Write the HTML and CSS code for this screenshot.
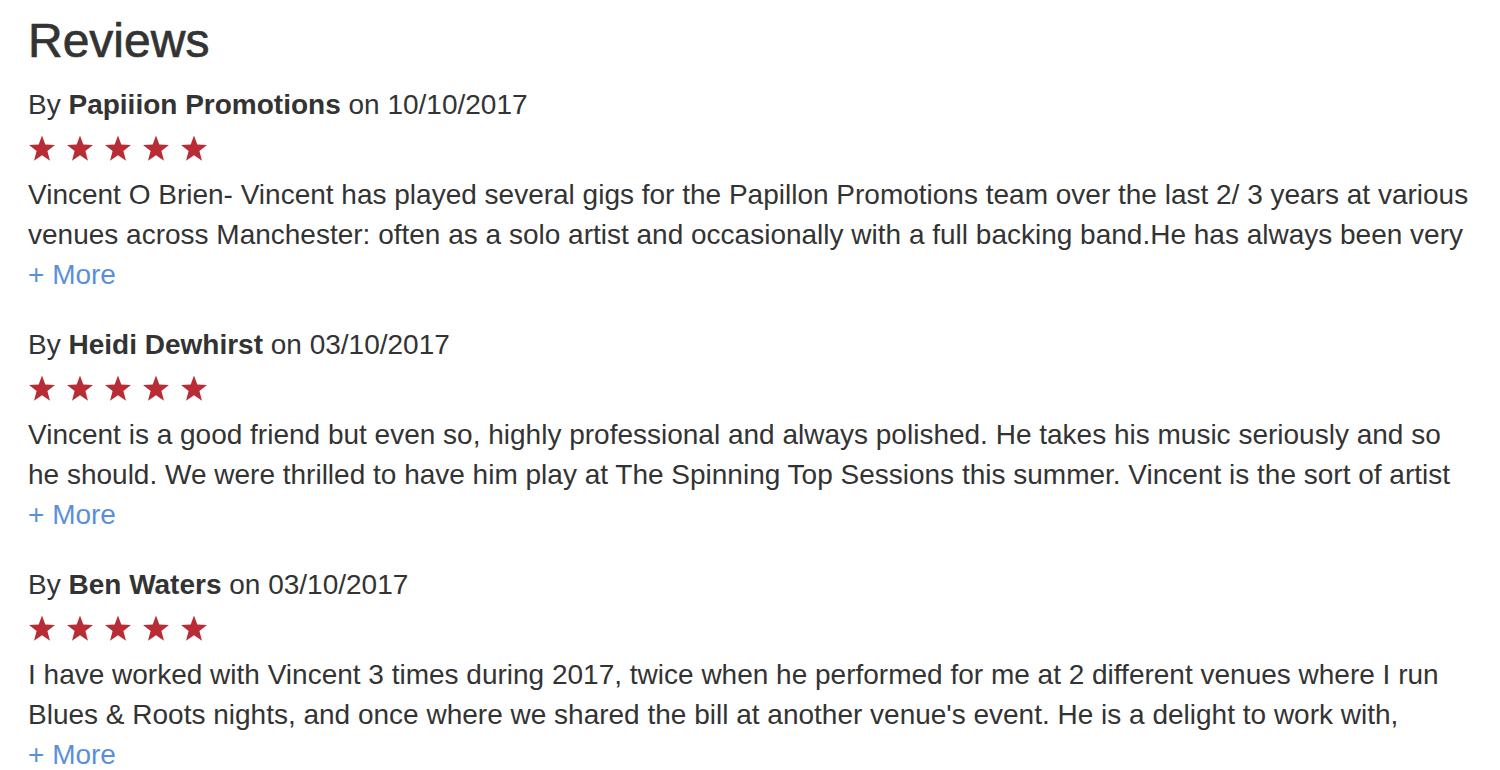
FILE: index.html
```html
<!DOCTYPE html>
<html lang="en">
<head>
    <meta charset="UTF-8">
    <meta name="viewport" content="width=device-width, initial-scale=1.0">
    <title>Reviews</title>
    <link rel="stylesheet" href="styles.css">
</head>
<body>
    <svg class="sprite" xmlns="http://www.w3.org/2000/svg">
        <symbol id="star" viewBox="0 0 26 26">
            <polygon points="13,0.5 16.2,9.2 25.5,9.6 18.2,15.4 20.7,24.8 13,19.5 5.3,24.8 7.8,15.4 0.5,9.6 9.8,9.2"/>
        </symbol>
    </svg>

    <section class="reviews">
        <h2>Reviews</h2>

        <div class="review">
            <div class="review-by">By <strong>Papiiion Promotions</strong> on 10/10/2017</div>
            <div class="stars">
                <svg><use href="#star"/></svg>
                <svg><use href="#star"/></svg>
                <svg><use href="#star"/></svg>
                <svg><use href="#star"/></svg>
                <svg><use href="#star"/></svg>
            </div>
            <p class="review-text">Vincent O Brien- Vincent has played several gigs for the Papillon Promotions team over the last 2/ 3 years at various venues across Manchester: often as a solo artist and occasionally with a full backing band.He has always been very</p>
            <a href="#" class="more">+ More</a>
        </div>

        <div class="review">
            <div class="review-by">By <strong>Heidi Dewhirst</strong> on 03/10/2017</div>
            <div class="stars">
                <svg><use href="#star"/></svg>
                <svg><use href="#star"/></svg>
                <svg><use href="#star"/></svg>
                <svg><use href="#star"/></svg>
                <svg><use href="#star"/></svg>
            </div>
            <p class="review-text">Vincent is a good friend but even so, highly professional and always polished. He takes his music seriously and so he should. We were thrilled to have him play at The Spinning Top Sessions this summer. Vincent is the sort of artist</p>
            <a href="#" class="more">+ More</a>
        </div>

        <div class="review">
            <div class="review-by">By <strong>Ben Waters</strong> on 03/10/2017</div>
            <div class="stars">
                <svg><use href="#star"/></svg>
                <svg><use href="#star"/></svg>
                <svg><use href="#star"/></svg>
                <svg><use href="#star"/></svg>
                <svg><use href="#star"/></svg>
            </div>
            <p class="review-text">I have worked with Vincent 3 times during 2017, twice when he performed for me at 2 different venues where I run Blues &amp; Roots nights, and once where we shared the bill at another venue's event. He is a delight to work with,</p>
            <a href="#" class="more">+ More</a>
        </div>
    </section>
</body>
</html>
```

FILE: styles.css
```css
body {
    margin: 0;
    background: #fff;
    color: #333;
    font-family: "Liberation Sans", Arial, sans-serif;
    font-size: 28px;
    line-height: 40px;
}

.sprite {
    display: none;
}

.reviews {
    padding: 0 22px 0 28px;
}

h2 {
    font-size: 48px;
    font-weight: 500;
    line-height: 56px;
    margin: 13px 0 16px;
    -webkit-text-stroke: 0.7px #333;
}

.review {
    margin-bottom: 30px;
}

.review-by strong {
    font-weight: bold;
}

.stars {
    display: flex;
    gap: 10px;
    padding: 10px 0 13px;
}

.stars svg {
    width: 28px;
    height: 27px;
    fill: #b82d35;
}

.review-text {
    margin: 0;
    max-height: 80px;
    overflow: hidden;
}

.more {
    display: block;
    color: #5b8fdc;
    text-decoration: none;
}
```
